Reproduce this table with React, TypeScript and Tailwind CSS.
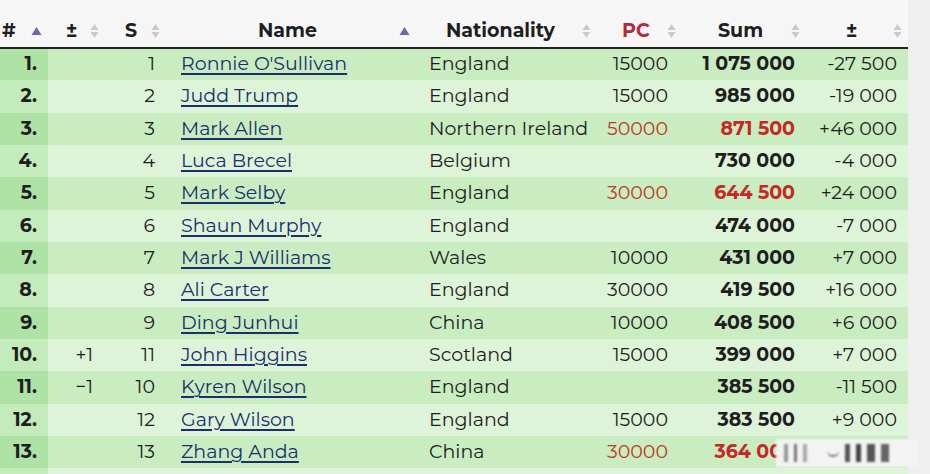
import React from "react";

type Row = {
  rank: string;
  move: string;
  seed: string;
  name: string;
  nat: string;
  pc: string;
  sum: string;
  diff: string;
  hot?: boolean;
};

const rows: Row[] = [
  { rank: "1.", move: "", seed: "1", name: "Ronnie O'Sullivan", nat: "England", pc: "15000", sum: "1 075 000", diff: "-27 500" },
  { rank: "2.", move: "", seed: "2", name: "Judd Trump", nat: "England", pc: "15000", sum: "985 000", diff: "-19 000" },
  { rank: "3.", move: "", seed: "3", name: "Mark Allen", nat: "Northern Ireland", pc: "50000", sum: "871 500", diff: "+46 000", hot: true },
  { rank: "4.", move: "", seed: "4", name: "Luca Brecel", nat: "Belgium", pc: "", sum: "730 000", diff: "-4 000" },
  { rank: "5.", move: "", seed: "5", name: "Mark Selby", nat: "England", pc: "30000", sum: "644 500", diff: "+24 000", hot: true },
  { rank: "6.", move: "", seed: "6", name: "Shaun Murphy", nat: "England", pc: "", sum: "474 000", diff: "-7 000" },
  { rank: "7.", move: "", seed: "7", name: "Mark J Williams", nat: "Wales", pc: "10000", sum: "431 000", diff: "+7 000" },
  { rank: "8.", move: "", seed: "8", name: "Ali Carter", nat: "England", pc: "30000", sum: "419 500", diff: "+16 000" },
  { rank: "9.", move: "", seed: "9", name: "Ding Junhui", nat: "China", pc: "10000", sum: "408 500", diff: "+6 000" },
  { rank: "10.", move: "+1", seed: "11", name: "John Higgins", nat: "Scotland", pc: "15000", sum: "399 000", diff: "+7 000" },
  { rank: "11.", move: "-1", seed: "10", name: "Kyren Wilson", nat: "England", pc: "", sum: "385 500", diff: "-11 500" },
  { rank: "12.", move: "", seed: "12", name: "Gary Wilson", nat: "England", pc: "15000", sum: "383 500", diff: "+9 000" },
  { rank: "13.", move: "", seed: "13", name: "Zhang Anda", nat: "China", pc: "30000", sum: "364 000", diff: "", hot: true },
];

function Both() {
  return (
    <svg width="9" height="16" viewBox="0 0 9 16" className="inline-block">
      <path d="M4.5 1 L8.5 7 L0.5 7 Z" fill="#c9c9c9" />
      <path d="M4.5 15 L8.5 9 L0.5 9 Z" fill="#c9c9c9" />
    </svg>
  );
}

function Up() {
  return (
    <svg width="11" height="10" viewBox="0 0 11 10" className="inline-block">
      <path d="M5.5 1 L10.5 9 L0.5 9 Z" fill="#6b66b3" />
    </svg>
  );
}

const font = { fontFamily: "Montserrat, 'Open Sans', 'Noto Sans', sans-serif" };

export default function App() {
  return (
    <div className="relative h-[474px] w-[930px] overflow-hidden bg-[#efefef] text-[19px] text-[#1e1e1e]" style={font}>
      <table className="w-[908px] table-fixed border-collapse bg-[#f6f6f6]">
        <colgroup>
          <col className="w-[48px]" />
          <col className="w-[60px]" />
          <col className="w-[60px]" />
          <col className="w-[250px]" />
          <col className="w-[182px]" />
          <col className="w-[80px]" />
          <col className="w-[120px]" />
          <col className="w-[108px]" />
        </colgroup>
        <thead>
          <tr className="h-[48px] border-b-2 border-[#222] font-bold">
            <th className="pt-[15px] text-left">
              <div className="flex items-center justify-between pl-[2px] pr-[6px]">
                <span>#</span>
                <Up />
              </div>
            </th>
            <th className="pt-[15px]">
              <div className="flex items-center justify-between pl-[18px] pr-[9px]">
                <span>±</span>
                <Both />
              </div>
            </th>
            <th className="pt-[15px]">
              <div className="flex items-center justify-between pl-[17px] pr-[8px]">
                <span>S</span>
                <Both />
              </div>
            </th>
            <th className="pt-[15px]">
              <div className="flex items-center justify-between pl-[90px] pr-[8px]">
                <span>Name</span>
                <Up />
              </div>
            </th>
            <th className="pt-[15px]">
              <div className="flex items-center justify-between pl-[28px] pr-[9px]">
                <span>Nationality</span>
                <Both />
              </div>
            </th>
            <th className="pt-[15px]">
              <div className="flex items-center justify-between pl-[22px] pr-[4px]">
                <span className="text-[#b32a3c]">PC</span>
                <Both />
              </div>
            </th>
            <th className="pt-[15px]">
              <div className="flex items-center justify-between pl-[38px] pr-[0px]">
                <span>Sum</span>
                <Both />
              </div>
            </th>
            <th className="pt-[15px]">
              <div className="flex items-center justify-between pl-[46px] pr-[6px]">
                <span>±</span>
                <Both />
              </div>
            </th>
          </tr>
        </thead>
        <tbody>
          {rows.map((r, i) => {
            const odd = i % 2 === 0;
            return (
              <tr key={r.rank} className={odd ? "h-[32.33px] bg-[#c9edc1]" : "h-[32.33px] bg-[#def4d9]"}>
                <td className={odd ? "bg-[#afe3a6] pr-[11px] text-right font-bold" : "bg-[#c3ebbb] pr-[11px] text-right font-bold"}>{r.rank}</td>
                <td className="pr-[15px] text-right">{r.move.replace("-", "−")}</td>
                <td className="pr-[13px] text-right">{r.seed}</td>
                <td className="pl-[13px]">
                  <a href="#" className="text-[#1b2f6e] underline decoration-[1.5px] underline-offset-[3px]">{r.name}</a>
                </td>
                <td className="pl-[11px]">{r.nat}</td>
                <td className={r.hot ? "pr-[12px] text-right text-[#c0392b]" : "pr-[12px] text-right"}>{r.pc}</td>
                <td className={r.hot ? "pr-[5px] text-right font-bold text-[#c62828]" : "pr-[5px] text-right font-bold"}>{r.sum}</td>
                <td className="pr-[11px] text-right">{r.diff}</td>
              </tr>
            );
          })}
          <tr className="h-[32px] bg-[#def4d9]">
            <td className="bg-[#c3ebbb]" />
            <td colSpan={7} />
          </tr>
        </tbody>
      </table>
      <div className="absolute left-[776px] top-[439px] flex h-[28px] w-[142px] items-center gap-[6px] bg-[#f3f3f3] pl-[8px] blur-[1.2px]">
        <span className="h-[18px] w-[4px] bg-[#999]" />
        <span className="h-[18px] w-[3px] bg-[#777]" />
        <span className="h-[18px] w-[4px] bg-[#aaa]" />
        <span className="ml-[14px] h-[8px] w-[12px] rounded-b-full border-b-2 border-[#777]" />
        <span className="h-[18px] w-[5px] bg-[#555]" />
        <span className="h-[18px] w-[5px] bg-[#444]" />
        <span className="h-[18px] w-[8px] bg-[#555]" />
        <span className="h-[18px] w-[8px] bg-[#666]" />
      </div>
    </div>
  );
}
